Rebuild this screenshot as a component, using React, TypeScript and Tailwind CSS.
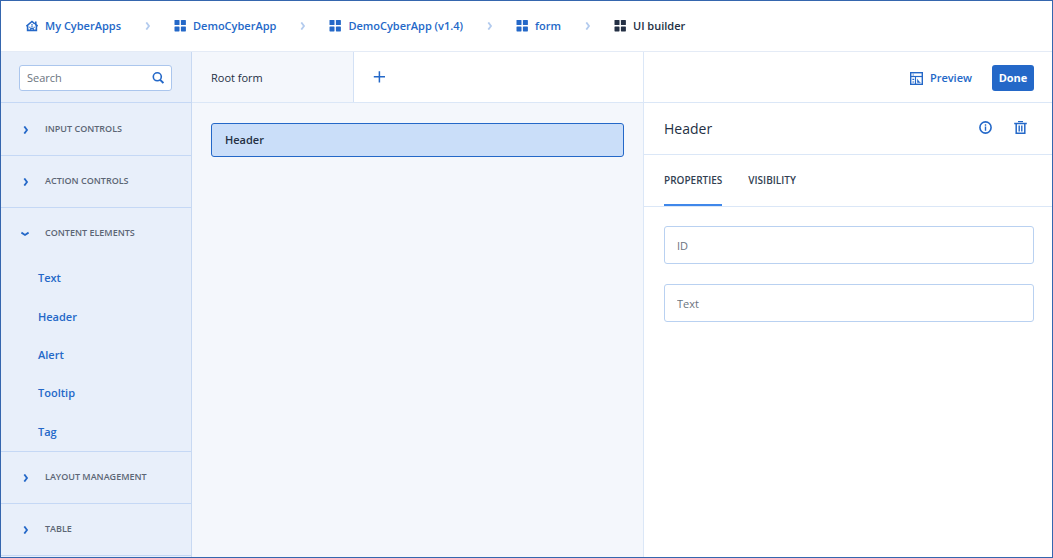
import React, { useState } from "react";

interface Crumb {
  label: string;
  icon: "home" | "grid";
}

interface Section {
  id: string;
  label: string;
  items: string[];
}

const CRUMBS: Crumb[] = [
  { label: "My CyberApps", icon: "home" },
  { label: "DemoCyberApp", icon: "grid" },
  { label: "DemoCyberApp (v1.4)", icon: "grid" },
  { label: "form", icon: "grid" },
  { label: "UI builder", icon: "grid" },
];

const SECTIONS: Section[] = [
  { id: "input", label: "INPUT CONTROLS", items: [] },
  { id: "action", label: "ACTION CONTROLS", items: [] },
  {
    id: "content",
    label: "CONTENT ELEMENTS",
    items: ["Text", "Header", "Alert", "Tooltip", "Tag"],
  },
  { id: "layout", label: "LAYOUT MANAGEMENT", items: [] },
  { id: "table", label: "TABLE", items: [] },
];

const HomeIcon = () => (
  <svg className="h-3 w-3 shrink-0" viewBox="0 0 12 12" fill="none" stroke="currentColor">
    <path d="M0.4 6.2 6 1.5 8.8 3.8M11.6 6.2 9.8 4.7V1.6" strokeWidth="1.6" />
    <path d="M1.6 5.4v5h8.8V4.6" strokeWidth="1.6" />
    <path d="M4.7 11V8.4h2.6V11" strokeWidth="1.1" />
    <path d="M3.2 7.2h1.2M7.6 7.2h1.2M5.2 4.9h1.6M5.4 6.6h1.2" strokeWidth="1.1" />
  </svg>
);

const GridIcon = () => (
  <svg className="h-3 w-3 shrink-0" viewBox="0 0 12 12" fill="currentColor">
    <rect x="0.5" y="0" width="5" height="5" rx="0.6" />
    <rect x="6.9" y="0" width="5" height="5" rx="0.6" />
    <rect x="0.5" y="6.4" width="5" height="5" rx="0.6" />
    <rect x="6.9" y="6.4" width="5" height="5" rx="0.6" />
  </svg>
);

const Chevron = ({ className = "" }: { className?: string }) => (
  <svg className={`h-2 w-1.5 ${className}`} viewBox="0 0 6 8" fill="none" stroke="currentColor" strokeWidth="1.8">
    <path d="M1.3 0.4 4 4 1.3 7.6" />
  </svg>
);

const ChevronDown = () => (
  <svg className="h-2 w-2" viewBox="0 0 8 8" fill="none" stroke="currentColor" strokeWidth="1.8">
    <path d="M0.4 2.6 4 5 7.6 2.6" />
  </svg>
);

const SearchIcon = () => (
  <svg className="h-3 w-3" viewBox="0 0 12 12" fill="none" stroke="currentColor" strokeWidth="1.6">
    <circle cx="5.3" cy="4.8" r="4" />
    <path d="m8.2 7.8 3.2 3.2" strokeWidth="1.9" />
  </svg>
);

const PlusIcon = () => (
  <svg className="h-3 w-3" viewBox="0 0 12 12" fill="none" stroke="currentColor" strokeWidth="1.5">
    <path d="M6.4 0.2v11.2M0.8 5.8H12" />
  </svg>
);

const PreviewIcon = () => (
  <svg className="h-[13px] w-[13px]" viewBox="0 0 13 13" fill="none" stroke="currentColor">
    <rect x="0.7" y="0.7" width="11.6" height="11.6" strokeWidth="1.4" />
    <path d="M1 4.5h11" strokeWidth="1.2" />
    <path d="M5.5 5v7" strokeWidth="1.1" />
    <path d="M3.2 1.5v2.4" strokeWidth="0.6" />
    <path d="M2.4 7.4h1.8M2.4 10h1.8" strokeWidth="1.1" />
    <path d="M7.2 6.6v4.2h3.8l-2-1.6z" fill="currentColor" stroke="none" />
  </svg>
);

const InfoIcon = () => (
  <svg className="h-[13px] w-[13px]" viewBox="0 0 13 13" fill="none" stroke="currentColor">
    <circle cx="6.5" cy="6.5" r="5.6" strokeWidth="1.6" />
    <path d="M6.5 5.6v4.1M6.5 3.3v1.4" strokeWidth="1.4" />
  </svg>
);

const TrashIcon = () => (
  <svg className="h-[13px] w-[13px]" viewBox="0 0 13 13" fill="none" stroke="currentColor">
    <path d="M4 0.6h5" strokeWidth="1.2" />
    <path d="M0.2 2.5h12.6" strokeWidth="1.5" />
    <path d="M2.2 3v9.2h8.6V3" strokeWidth="1.5" />
    <path d="M5.2 4.6v5.8M7.8 4.6v5.8" strokeWidth="1.4" />
  </svg>
);

const Breadcrumbs = () => (
  <nav aria-label="Breadcrumb" className="border-b border-[#e4ebf6]">
    <ol className="flex h-[50px] items-center pl-[25px] font-semibold">
      {CRUMBS.map((crumb, i) => {
        const last = i === CRUMBS.length - 1;
        return (
          <li key={crumb.label} className="flex items-center">
            <a
              href="#"
              aria-current={last ? "page" : undefined}
              className={`flex items-center gap-[7px] ${last ? "text-[#243044]" : "text-[#2468c8]"}`}
            >
              {crumb.icon === "home" ? <HomeIcon /> : <GridIcon />}
              <span>{crumb.label}</span>
            </a>
            {!last && <Chevron className="mr-[23px] ml-6 text-[#b3cbee]" />}
          </li>
        );
      })}
    </ol>
  </nav>
);

const Sidebar = () => {
  const [open, setOpen] = useState("content");

  return (
    <aside className="flex w-[191px] shrink-0 flex-col overflow-hidden border-r border-[#c8d9f2] bg-[#e8effa]">
      <div className="flex h-[51px] shrink-0 items-center border-b border-[#c5d8f5] pt-0.5 pr-[19px] pl-[18px]">
        <label className="flex h-[26px] w-full items-center rounded-[3px] border border-[#abc6ed] bg-white px-[7px] text-[#2468c8]">
          <input
            type="text"
            aria-label="Search"
            placeholder="Search"
            className="min-w-0 flex-1 text-[#243044] outline-none placeholder:text-[#6b7480]"
          />
          <SearchIcon />
        </label>
      </div>
      <div className="pt-px">
        {SECTIONS.map((section) => {
          const expanded = section.id === open && section.items.length > 0;
          return (
            <section key={section.id} className="border-b border-[#c5d8f5]">
              <button
                type="button"
                aria-expanded={expanded}
                onClick={() => setOpen(expanded ? "" : section.id)}
                className="flex h-[51px] w-full items-center pl-5 text-left text-[9px] font-semibold text-[#5c6675]"
              >
                <span className="flex w-6 items-center text-[#2468c8]">
                  {expanded ? <ChevronDown /> : <Chevron className="ml-0.5" />}
                </span>
                <span className="pb-0.5">{section.label}</span>
              </button>
              {expanded && (
                <ul className="grid h-48 grid-rows-5 pl-[37px] font-semibold text-[#2468c8]">
                  {section.items.map((item) => (
                    <li key={item} className="flex items-center">
                      <button type="button">{item}</button>
                    </li>
                  ))}
                </ul>
              )}
            </section>
          );
        })}
      </div>
    </aside>
  );
};

const Canvas = () => (
  <main className="flex min-w-0 flex-1 flex-col bg-[#f4f7fc]">
    <div className="flex h-[51px] border-b border-[#dbe7f7] bg-white">
      <button
        type="button"
        className="w-[162px] border-r border-[#d3e1f5] bg-[#f4f7fc] pt-0.5 pl-[19px] text-left"
      >
        Root form
      </button>
      <button type="button" aria-label="Add form" className="w-[51px] pl-[19px] text-[#2468c8]">
        <PlusIcon />
      </button>
    </div>
    <div className="p-[19px] pt-5">
      <button
        type="button"
        className="h-[34px] w-full rounded-[3px] border border-[#2468c8] bg-[#cadef9] px-[13px] text-left font-semibold"
      >
        Header
      </button>
    </div>
  </main>
);

const Inspector = () => {
  const [tab, setTab] = useState("PROPERTIES");

  return (
    <aside className="w-[409px] shrink-0 border-l border-[#dbe7f7] bg-white">
      <div className="flex h-[51px] items-center justify-end gap-5 border-b border-[#dbe7f7] pt-0.5 pr-[18px]">
        <button type="button" className="flex items-center gap-[7px] font-semibold text-[#2468c8]">
          <PreviewIcon />
          Preview
        </button>
        <button type="button" className="h-[26px] w-[42px] rounded-[3px] bg-[#2468c8] text-center font-bold text-white">
          Done
        </button>
      </div>
      <div className="flex h-[52px] items-center border-b border-[#dbe7f7] pr-[25px] pl-5 text-[#2468c8]">
        <h2 className="flex-1 text-[14px] text-[#243044]">Header</h2>
        <div className="flex gap-[22px] pb-0.5">
          <button type="button" aria-label="Info">
            <InfoIcon />
          </button>
          <button type="button" aria-label="Delete">
            <TrashIcon />
          </button>
        </div>
      </div>
      <div
        role="tablist"
        className="flex h-[52px] gap-[26px] border-b border-[#dbe7f7] pl-5 text-[10px] font-semibold text-[#333f52]"
      >
        {["PROPERTIES", "VISIBILITY"].map((name) => (
          <button
            key={name}
            type="button"
            role="tab"
            aria-selected={tab === name}
            onClick={() => setTab(name)}
            className={`border-b-2 ${tab === name ? "border-[#3f87ea]" : "border-transparent"}`}
          >
            {name}
          </button>
        ))}
      </div>
      <form className="flex flex-col gap-5 py-[19px] pr-[18px] pl-5">
        {["ID", "Text"].map((field) => (
          <input
            key={field}
            type="text"
            aria-label={field}
            placeholder={field}
            className="h-[38px] w-full rounded-[3px] border border-[#b9d1f1] px-3 outline-none placeholder:text-[#6b7480]"
          />
        ))}
      </form>
    </aside>
  );
};

export default function App() {
  return (
    <div className="flex h-screen flex-col overflow-hidden border border-[#3566ae] bg-white font-['Open_Sans',sans-serif] text-[11px] leading-4 text-[#243044]">
      <Breadcrumbs />
      <div className="flex min-h-0 flex-1">
        <Sidebar />
        <Canvas />
        <Inspector />
      </div>
    </div>
  );
}
